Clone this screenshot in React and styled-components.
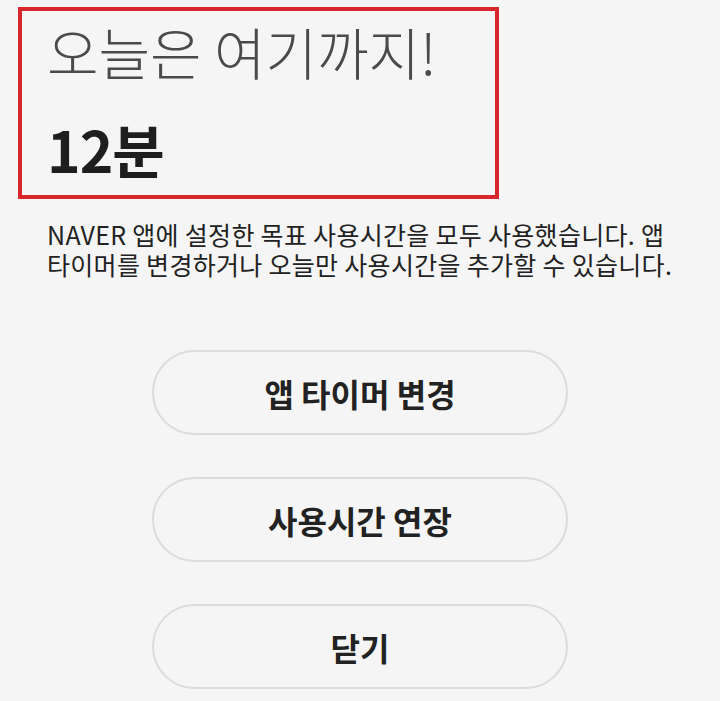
import React from 'react';
import styled, { createGlobalStyle } from 'styled-components';

const GlobalStyle = createGlobalStyle`
  html, body {
    margin: 0;
    padding: 0;
    background: #f5f5f5;
  }
  body {
    font-family: "Noto Sans CJK KR", "Noto Sans", sans-serif;
    color: #222;
  }
`;

const Screen = styled.div`
  display: flex;
  flex-direction: column;
  min-height: 701px;
  padding-top: 7px;
  box-sizing: border-box;
`;

const Highlight = styled.section`
  width: 481px;
  height: 192px;
  margin-left: 18px;
  border: 4px solid #d9252c;
  box-sizing: border-box;
  padding: 8px 0 0 25px;
  display: flex;
  flex-direction: column;
`;

const Title = styled.h1`
  margin: 0;
  font-size: 56px;
  line-height: 64px;
  font-weight: 300;
  color: #4a4a4a;
`;

const Remaining = styled.div`
  margin-top: 33px;
  font-size: 57px;
  line-height: 64px;
  font-weight: 700;
  color: #1e1e1e;
  letter-spacing: -1px;
`;

const Message = styled.p`
  margin: 20px 0 0 47px;
  font-size: 25px;
  line-height: 30px;
  color: #222;
  letter-spacing: 0.3px;
  white-space: nowrap;
`;

const Actions = styled.div`
  display: flex;
  flex-direction: column;
  align-items: center;
  gap: 42px;
  margin-top: 71px;
`;

const PillButton = styled.button`
  width: 416px;
  height: 85px;
  border: 2px solid #dcdcdc;
  border-radius: 43px;
  background: #f5f5f5;
  font-family: inherit;
  font-size: 32px;
  font-weight: 700;
  color: #222;
  cursor: pointer;
`;

const actions = ['앱 타이머 변경', '사용시간 연장', '닫기'];

export default function App() {
  return (
    <>
      <GlobalStyle />
      <Screen>
        <Highlight>
          <Title>오늘은 여기까지!</Title>
          <Remaining>12분</Remaining>
        </Highlight>
        <Message>
          NAVER 앱에 설정한 목표 사용시간을 모두 사용했습니다. 앱
          <br />
          타이머를 변경하거나 오늘만 사용시간을 추가할 수 있습니다.
        </Message>
        <Actions>
          {actions.map((label) => (
            <PillButton key={label}>{label}</PillButton>
          ))}
        </Actions>
      </Screen>
    </>
  );
}
